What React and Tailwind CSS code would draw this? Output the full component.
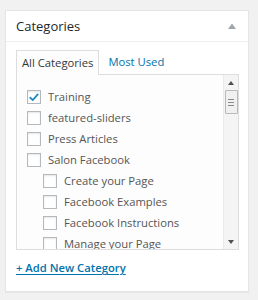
import React from 'react';

const items = [
  { label: 'Training', checked: true, depth: 0 },
  { label: 'featured-sliders', depth: 0 },
  { label: 'Press Articles', depth: 0 },
  { label: 'Salon Facebook', depth: 0 },
  { label: 'Create your Page', depth: 1 },
  { label: 'Facebook Examples', depth: 1 },
  { label: 'Facebook Instructions', depth: 1 },
  { label: 'Manage your Page', depth: 1 },
];

const Checkbox = ({ checked }) => (
  <span className="w-[14px] h-[14px] shrink-0 border border-[#b4b9be] bg-white shadow-[inset_0_1px_2px_rgba(0,0,0,0.1)] flex items-center justify-center">
    {checked && (
      <svg viewBox="0 0 16 16" className="w-[13px] h-[13px]">
        <path d="M3 8.2 L6.3 11.5 L13 3.8" fill="none" stroke="#1e8cbe" strokeWidth="2.4" strokeLinecap="round" strokeLinejoin="round" />
      </svg>
    )}
  </span>
);

const App = () => {
  return (
    <div className="w-[258px] h-[300px] bg-[#f1f1f1] pt-[10px] pl-[5px] font-['Open_Sans',sans-serif]">
      <div className="w-[244px] h-[282px] bg-white border border-[#e5e5e5] shadow-[0_1px_1px_rgba(0,0,0,0.04)]">
        <div className="h-[31px] border-b border-[#eee] flex items-center justify-between pl-[10px] pr-[12px]">
          <h2 className="text-[13px] text-[#23282d] leading-none">Categories</h2>
          <svg viewBox="0 0 8 6" className="w-[8px] h-[6px]">
            <path d="M0 6 L4 0.5 L8 6 Z" fill="#a0a5aa" />
          </svg>
        </div>

        <div className="pl-[10px] pr-[9px] pt-[7px]">
          <div className="flex items-end h-[25px]">
            <div className="h-[25px] px-[5px] border border-[#ddd] border-b-0 bg-[#fdfdfd] flex items-center text-[11.25px] text-[#32373c] relative top-[1px]">
              All Categories
            </div>
            <div className="h-[24px] ml-[4px] px-[5px] flex items-center text-[11.25px] text-[#0073aa]">
              Most Used
            </div>
          </div>

          <div className="h-[176px] border border-[#ddd] bg-[#fdfdfd] flex overflow-hidden">
            <div className="flex-1 overflow-hidden pt-[15px] pl-[10px]">
              {items.map((item) => (
                <div
                  key={item.label}
                  className={`h-[21px] flex items-start gap-[7px] ${item.depth ? 'pl-[16px]' : ''}`}
                >
                  <Checkbox checked={item.checked} />
                  <span className="text-[11.25px] leading-[14px] text-[#555] whitespace-nowrap">{item.label}</span>
                </div>
              ))}
            </div>
            <div className="w-[15px] bg-[#f4f4f4] border-l border-[#eaeaea] flex flex-col items-center">
              <div className="h-[15px] w-full flex items-center justify-center">
                <svg viewBox="0 0 6 4" className="w-[6px] h-[4px]">
                  <path d="M0 4 L3 0 L6 4 Z" fill="#505050" />
                </svg>
              </div>
              <div className="w-[13px] h-[24px] bg-[#f0f0f0] border border-[#b9b9b9] rounded-[1px] flex flex-col items-center justify-center gap-[2px]">
                <span className="w-[6px] h-px bg-[#8a8a8a]" />
                <span className="w-[6px] h-px bg-[#8a8a8a]" />
                <span className="w-[6px] h-px bg-[#8a8a8a]" />
              </div>
              <div className="flex-1" />
              <div className="h-[15px] w-full flex items-center justify-center">
                <svg viewBox="0 0 6 4" className="w-[6px] h-[4px]">
                  <path d="M0 0 L6 0 L3 4 Z" fill="#505050" />
                </svg>
              </div>
            </div>
          </div>

          <a href="#" className="block mt-[10px] text-[11.25px] font-semibold text-[#0073aa] underline underline-offset-[2px] leading-[16px]">
            + Add New Category
          </a>
        </div>
      </div>
    </div>
  );
};

export default App;
